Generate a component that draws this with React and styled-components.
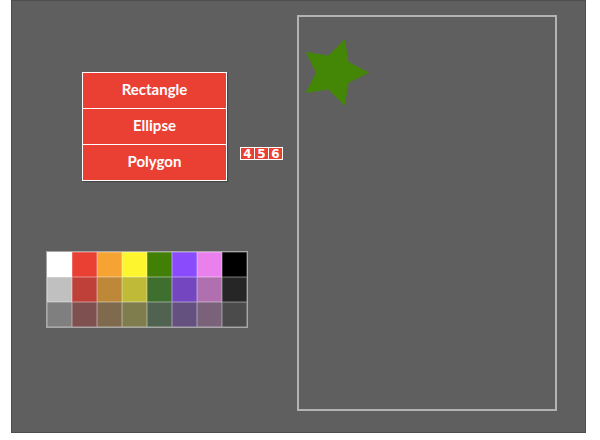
import React from "react";
import styled, { createGlobalStyle } from "styled-components";

const GlobalStyle = createGlobalStyle`
  html, body {
    margin: 0;
    padding: 0;
    background: #ffffff;
    font-family: "Lato", "DejaVu Sans", sans-serif;
  }
`;

const Frame = styled.div`
  margin-left: 11px;
  width: 575px;
  height: 433px;
  box-sizing: border-box;
  border: 1px solid #4e4e4e;
  background: #5f5f5f;
  display: flex;
`;

const LeftPane = styled.div`
  width: 285px;
  display: flex;
  flex-direction: column;
`;

const MenuRow = styled.div`
  display: flex;
  align-items: flex-start;
  margin: 71px 0 0 70px;
  gap: 13px;
`;

const Menu = styled.div`
  width: 145px;
  box-sizing: border-box;
  display: flex;
  flex-direction: column;
  border: 1px solid #ffffff;
  box-shadow: 1px 1px 1px rgba(0, 0, 0, 0.25);
`;

const MenuItem = styled.div`
  height: ${(p) => (p.first ? 35 : 36)}px;
  box-sizing: border-box;
  padding-bottom: 3px;
  display: flex;
  align-items: center;
  justify-content: center;
  background: #ea4034;
  color: #ffffff;
  font-weight: 700;
  font-size: 15px;
  border-top: ${(p) => (p.first ? "none" : "1px solid #ffffff")};
`;

const Counter = styled.div`
  margin-top: 75px;
  display: flex;
  border: 1px solid #ffffff;
  background: #ffffff;
  gap: 1px;
`;

const Digit = styled.span`
  width: 13px;
  height: 11px;
  display: flex;
  align-items: center;
  justify-content: center;
  background: #ea4034;
  color: #ffffff;
  font-family: "DejaVu Sans", sans-serif;
  font-weight: 700;
  font-size: 12px;
`;

const Palette = styled.div`
  margin: 70px 0 0 34px;
  display: grid;
  grid-template-columns: repeat(8, 25px);
  grid-auto-rows: 25px;
  width: max-content;
  border: 1px solid rgba(255, 255, 255, 0.45);
`;

const Swatch = styled.div`
  background: ${(p) => p.color};
  box-shadow: inset 0 0 0 0.5px rgba(255, 255, 255, 0.45);
`;

const Canvas = styled.div`
  position: relative;
  margin-top: 14px;
  width: 260px;
  height: 396px;
  box-sizing: border-box;
  border: 2px solid #b3b3b3;
`;

const Stage = styled.svg`
  position: absolute;
  left: 0;
  top: 0;
  width: 100%;
  height: 100%;
`;

const SWATCHES = [
  "#ffffff", "#ea4034", "#f5a433", "#fdf52e", "#417f06", "#8a4bfd", "#ea80ee", "#000000",
  "#c0c0c0", "#be4038", "#bd8838", "#bfbb38", "#3f6f2f", "#7446bf", "#b070b0", "#262626",
  "#7f7f7f", "#7f5050", "#7f6a4d", "#7f7d4d", "#506350", "#65517f", "#7a637a", "#4b4b4b",
];

function starPoints(cx, cy, outer, inner) {
  const pts = [];
  for (let i = 0; i < 10; i++) {
    const r = i % 2 === 0 ? outer : inner;
    const a = (Math.PI / 5) * i;
    pts.push(`${(cx + r * Math.cos(a)).toFixed(2)},${(cy + r * Math.sin(a)).toFixed(2)}`);
  }
  return pts.join(" ");
}

export default function App() {
  return (
    <>
      <GlobalStyle />
      <Frame>
        <LeftPane>
          <MenuRow>
            <Menu>
              <MenuItem first>Rectangle</MenuItem>
              <MenuItem>Ellipse</MenuItem>
              <MenuItem>Polygon</MenuItem>
            </Menu>
            <Counter>
              <Digit>4</Digit>
              <Digit>5</Digit>
              <Digit>6</Digit>
            </Counter>
          </MenuRow>
          <Palette>
            {SWATCHES.map((c, i) => (
              <Swatch key={i} color={c} />
            ))}
          </Palette>
        </LeftPane>
        <Canvas>
          <Stage>
            <polygon points={starPoints(35, 55.5, 35, 18)} fill="#448706" />
          </Stage>
        </Canvas>
      </Frame>
    </>
  );
}
